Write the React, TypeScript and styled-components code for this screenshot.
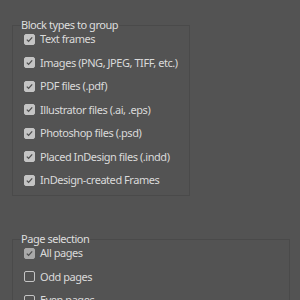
import styled, { createGlobalStyle } from "styled-components";

const GlobalStyle = createGlobalStyle`
  html, body {
    margin: 0;
    padding: 0;
    background-color: #535353;
  }
  body {
    font-family: "Noto Sans", "Liberation Sans", sans-serif;
    font-size: 11px;
    letter-spacing: -0.45px;
    color: #dadada;
    overflow: hidden;
  }
`;

const Page = styled.div`
  display: flex;
  flex-direction: column;
  gap: 36px;
  padding: 18px 0 0 12px;
  width: 300px;
  height: 300px;
  box-sizing: border-box;
`;

const Group = styled.fieldset<{ $width: number }>`
  width: ${(p) => p.$width}px;
  box-sizing: border-box;
  margin: 0;
  padding: 0 0 8px 11px;
  border: 1px solid #4a4a4a;
  display: flex;
  flex-direction: column;
  gap: 9.5px;
  min-width: 0;
`;

const Legend = styled.legend`
  padding: 0;
  margin-left: -3px;
  line-height: 14px;
  color: #dedede;
`;

const Row = styled.label`
  display: flex;
  align-items: center;
  gap: 5px;
  height: 14px;
  line-height: 14px;
  white-space: nowrap;
`;

const Box = styled.span<{ $checked: boolean; $dim?: boolean }>`
  width: 11px;
  height: 11px;
  box-sizing: border-box;
  border-radius: 2px;
  display: flex;
  align-items: center;
  justify-content: center;
  flex: none;
  background-color: ${(p) =>
    p.$checked ? (p.$dim ? "#a9a9a9" : "#c4c4c4") : "transparent"};
  border: 1px solid ${(p) => (p.$dim ? "#a9a9a9" : "#c4c4c4")};
`;

function Check({ checked, dim }: { checked: boolean; dim?: boolean }) {
  return (
    <Box $checked={checked} $dim={dim}>
      {checked && (
        <svg width="9" height="9" viewBox="0 0 9 9">
          <path
            d="M1.8 4.6 L3.6 6.4 L7.2 2.4"
            fill="none"
            stroke="#4e4e4e"
            strokeWidth="1.3"
          />
        </svg>
      )}
    </Box>
  );
}

const blockTypes = [
  "Text frames",
  "Images (PNG, JPEG, TIFF, etc.)",
  "PDF files (.pdf)",
  "Illustrator files (.ai, .eps)",
  "Photoshop files (.psd)",
  "Placed InDesign files (.indd)",
  "InDesign-created Frames",
];

const pages = [
  { label: "All pages", checked: true, dim: true },
  { label: "Odd pages", checked: false },
  { label: "Even pages", checked: false },
];

export default function App() {
  return (
    <>
      <GlobalStyle />
      <Page>
        <Group $width={178}>
          <Legend>Block types to group</Legend>
          {blockTypes.map((t) => (
            <Row key={t}>
              <Check checked />
              {t}
            </Row>
          ))}
        </Group>
        <Group $width={278}>
          <Legend>Page selection</Legend>
          {pages.map((p) => (
            <Row key={p.label}>
              <Check checked={p.checked} dim={p.dim} />
              {p.label}
            </Row>
          ))}
        </Group>
      </Page>
    </>
  );
}
